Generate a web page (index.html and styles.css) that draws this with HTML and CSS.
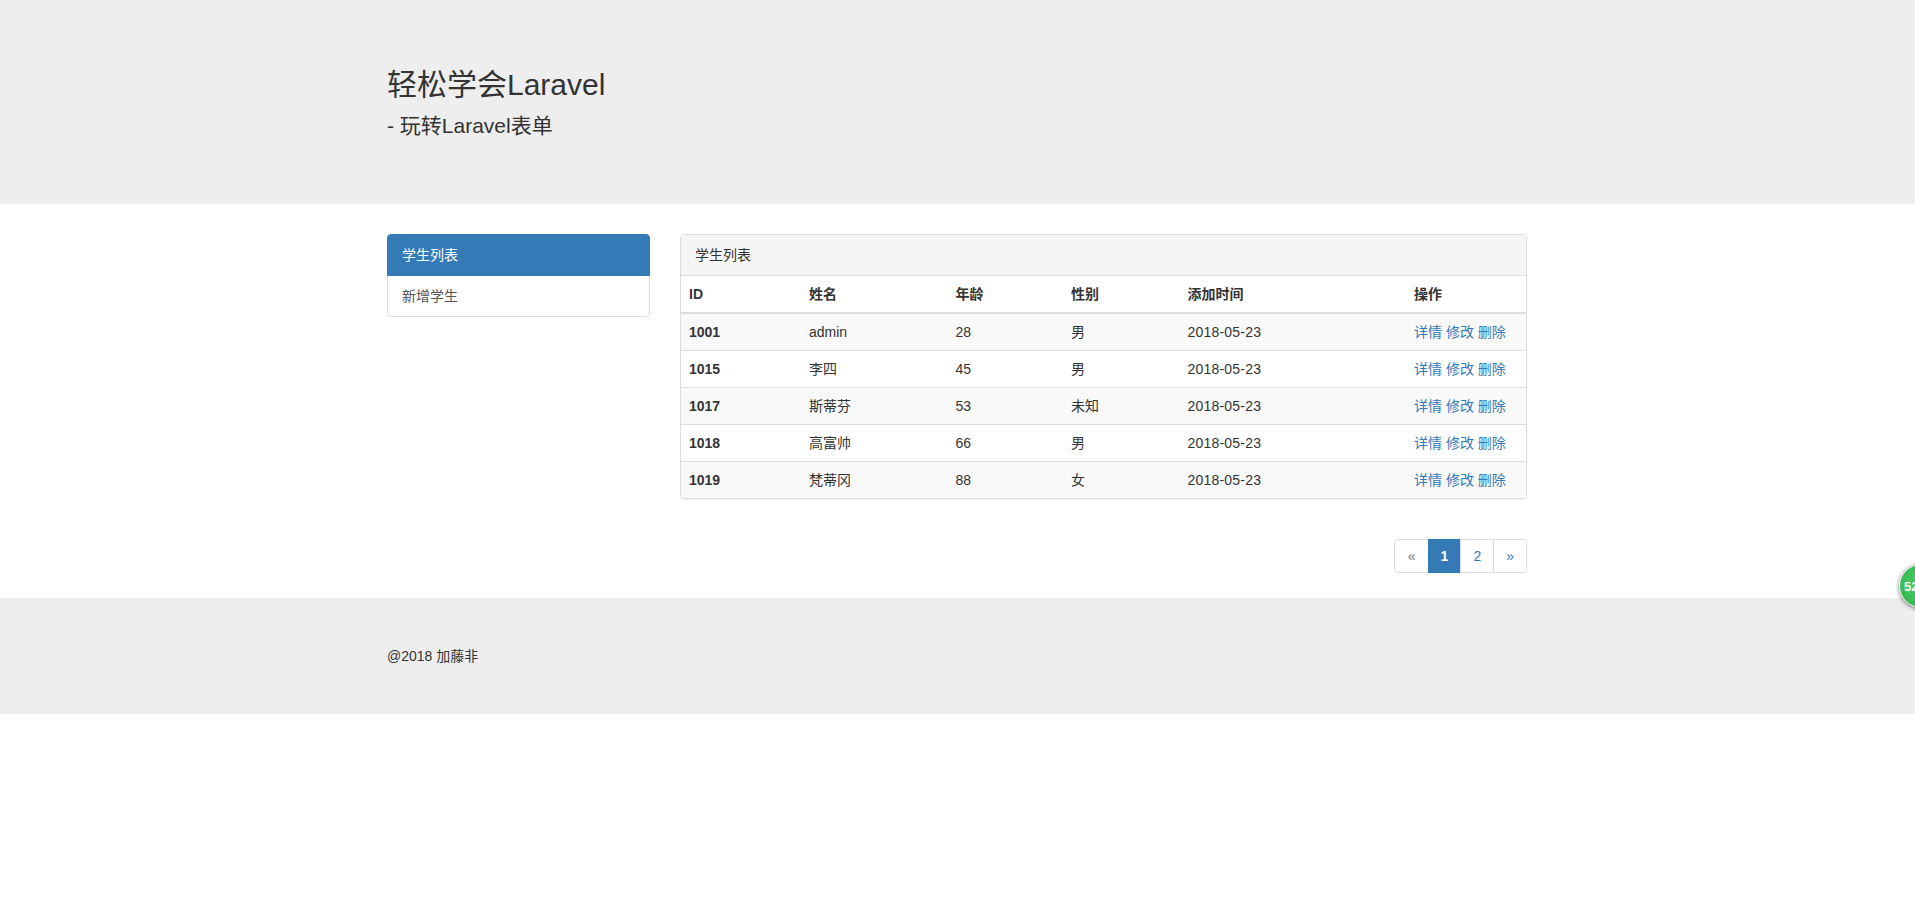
FILE: index.html
```html
<!DOCTYPE html>
<html lang="zh-CN">
<head>
    <meta charset="UTF-8">
    <meta name="viewport" content="width=device-width, initial-scale=1.0">
    <title>轻松学会Laravel - 玩转Laravel表单</title>
    <link rel="stylesheet" href="styles.css">
</head>
<body>
    <div class="jumbotron">
        <div class="container">
            <h2>轻松学会Laravel</h2>
            <p>- 玩转Laravel表单</p>
        </div>
    </div>

    <div class="container main">
        <div class="sidebar">
            <div class="list-group">
                <a href="#" class="list-group-item active">学生列表</a>
                <a href="#" class="list-group-item">新增学生</a>
            </div>
        </div>
        <div class="content">
            <div class="panel">
                <div class="panel-heading">学生列表</div>
                <table class="table">
                    <colgroup>
                        <col class="col-id">
                        <col class="col-name">
                        <col class="col-age">
                        <col class="col-sex">
                        <col class="col-time">
                        <col class="col-op">
                    </colgroup>
                    <thead>
                        <tr><th>ID</th><th>姓名</th><th>年龄</th><th>性别</th><th>添加时间</th><th>操作</th></tr>
                    </thead>
                    <tbody>
                        <tr>
                            <th>1001</th><td>admin</td><td>28</td><td>男</td><td class="date">2018-05-23</td>
                            <td><a href="#">详情</a> <a href="#">修改</a> <a href="#">删除</a></td>
                        </tr>
                        <tr>
                            <th>1015</th><td>李四</td><td>45</td><td>男</td><td class="date">2018-05-23</td>
                            <td><a href="#">详情</a> <a href="#">修改</a> <a href="#">删除</a></td>
                        </tr>
                        <tr>
                            <th>1017</th><td>斯蒂芬</td><td>53</td><td>未知</td><td class="date">2018-05-23</td>
                            <td><a href="#">详情</a> <a href="#">修改</a> <a href="#">删除</a></td>
                        </tr>
                        <tr>
                            <th>1018</th><td>高富帅</td><td>66</td><td>男</td><td class="date">2018-05-23</td>
                            <td><a href="#">详情</a> <a href="#">修改</a> <a href="#">删除</a></td>
                        </tr>
                        <tr>
                            <th>1019</th><td>梵蒂冈</td><td>88</td><td>女</td><td class="date">2018-05-23</td>
                            <td><a href="#">详情</a> <a href="#">修改</a> <a href="#">删除</a></td>
                        </tr>
                    </tbody>
                </table>
            </div>
            <ul class="pagination">
                <li><a href="#" class="muted">«</a></li>
                <li><a href="#" class="active">1</a></li>
                <li><a href="#">2</a></li>
                <li><a href="#">»</a></li>
            </ul>
        </div>
    </div>

    <div class="footer">
        <div class="container">
            <p>@2018 加藤非</p>
        </div>
    </div>

    <div class="float-ball">52</div>
</body>
</html>
```

FILE: styles.css
```css
html, body {
    overflow-x: hidden;
}

body {
    position: relative;
    margin: 0;
    min-height: 917px;
    font-family: "Liberation Sans", "Noto Sans CJK SC", sans-serif;
    font-size: 14px;
    line-height: 20px;
    color: #333;
    background-color: #fff;
}

a {
    color: #337ab7;
    text-decoration: none;
}

.container {
    width: 1140px;
    margin: 0 auto 0 387px;
}

/* header */
.jumbotron {
    height: 204px;
    padding-top: 68px;
    box-sizing: border-box;
    background-color: #eee;
}

.jumbotron h2 {
    margin: 0 0 10px;
    font-size: 30px;
    font-weight: 400;
    line-height: 33px;
}

.jumbotron p {
    margin: 0;
    font-size: 21px;
    line-height: 30px;
}

/* main */
.main {
    display: flex;
    gap: 30px;
    margin-top: 30px;
}

.sidebar {
    width: 263px;
    flex-shrink: 0;
}

.content {
    width: 847px;
}

.list-group-item {
    display: block;
    height: 42px;
    box-sizing: border-box;
    padding: 10px 14px;
    margin-bottom: -1px;
    color: #555;
    background-color: #fff;
    border: 1px solid #ddd;
}

.list-group-item:first-child {
    border-radius: 4px 4px 0 0;
}

.list-group-item:last-child {
    margin-bottom: 0;
    border-radius: 0 0 4px 4px;
}

.list-group-item.active {
    position: relative;
    z-index: 1;
    color: #fff;
    background-color: #337ab7;
    border-color: #337ab7;
}

/* panel */
.panel {
    margin-bottom: 40px;
    border: 1px solid #ddd;
    border-radius: 4px;
    box-shadow: 0 1px 1px rgba(0, 0, 0, 0.05);
    overflow: hidden;
}

.panel-heading {
    height: 41px;
    box-sizing: border-box;
    padding: 10px 14px;
    background-color: #f5f5f5;
    border-bottom: 1px solid #ddd;
}

.table {
    width: 100%;
    table-layout: fixed;
    border-collapse: collapse;
}

.col-id { width: 120px; }
.col-name { width: 146.5px; }
.col-age { width: 115.5px; }
.col-sex { width: 116.5px; }
.col-time { width: 226.5px; }

.table th,
.table td {
    height: 36px;
    box-sizing: border-box;
    padding: 0 8px;
    line-height: 20px;
    text-align: left;
    vertical-align: middle;
    border-top: 1px solid #ddd;
}

.table thead th {
    height: 37px;
    border-top: 0;
    border-bottom: 2px solid #ddd;
}

.table tbody tr {
    height: 37px;
}

.table tbody tr:nth-child(1) th,
.table tbody tr:nth-child(1) td {
    border-top: 0;
}

.table tbody tr:nth-child(odd) {
    background-color: #f9f9f9;
}

.table td.date {
    letter-spacing: 0.2px;
}

/* pagination */
.pagination {
    display: flex;
    justify-content: flex-end;
    margin: 0 0 25px;
    padding: 0;
    list-style: none;
}

.pagination a {
    display: block;
    padding: 6px 12px;
    margin-left: -1px;
    background-color: #fff;
    border: 1px solid #ddd;
}

.pagination li:first-child a {
    margin-left: 0;
    padding-left: 13px;
    border-radius: 4px 0 0 4px;
}

.pagination li:last-child a {
    border-radius: 0 4px 4px 0;
}

.pagination a.muted {
    color: #777;
}

.pagination a.active {
    color: #fff;
    font-weight: 700;
    background-color: #337ab7;
    border-color: #337ab7;
}

/* footer */
.footer {
    padding: 48px 0;
    background-color: #eee;
}

.footer p {
    margin: 0;
}

/* floating counter stuck to the window edge */
.float-ball {
    position: absolute;
    top: 564px;
    left: 1899px;
    width: 44px;
    height: 44px;
    box-sizing: border-box;
    padding-left: 4px;
    color: #fff;
    font-size: 13px;
    font-weight: 700;
    line-height: 44px;
    background: radial-gradient(circle at 50% 45%, #4fd06a, #2fae4b);
    border: 1px solid #e8efe8;
    border-radius: 50%;
    box-shadow: 0 1px 4px rgba(0, 0, 0, 0.55);
}
```
